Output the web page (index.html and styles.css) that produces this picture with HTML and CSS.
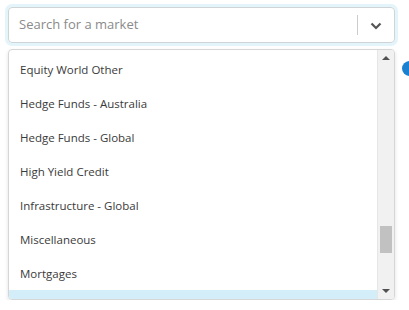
FILE: index.html
```html
<!DOCTYPE html>
<html lang="en">
<head>
  <meta charset="UTF-8" />
  <title>Market picker</title>
  <link rel="stylesheet" href="styles.css">
</head>
<body>
  <div class="picker">
    <div class="search">
      <input type="text" class="search-input" placeholder="Search for a market">
      <span class="divider"></span>
      <svg class="chevron" width="12" height="8" viewBox="0 0 12 8">
        <path d="M1.5 1.5 L6 6 L10.5 1.5" fill="none" stroke="#555" stroke-width="2.2"/>
      </svg>
    </div>

    <div class="menu">
      <ul class="options">
        <li>Equity World Other</li>
        <li>Hedge Funds - Australia</li>
        <li>Hedge Funds - Global</li>
        <li>High Yield Credit</li>
        <li>Infrastructure - Global</li>
        <li>Miscellaneous</li>
        <li>Mortgages</li>
        <li class="active"></li>
      </ul>
      <div class="scrollbar">
        <span class="arrow up"></span>
        <div class="track"><div class="thumb"></div></div>
        <span class="arrow down"></span>
      </div>
    </div>

    <span class="info-dot"></span>
  </div>
</body>
</html>
```

FILE: styles.css
```css
body {
  margin: 0;
  background-color: #ffffff;
  font-family: 'Open Sans', 'Liberation Sans', sans-serif;
}

.picker {
  position: relative;
  width: 387px;
  padding: 7px 0 0 8px;
}

.search {
  display: flex;
  align-items: center;
  height: 34px;
  border: 1px solid #cfd4d6;
  border-radius: 4px;
  box-shadow: 0 0 0 3px #e3f4fa;
}

.search-input {
  flex: 1;
  border: none;
  outline: none;
  background: transparent;
  padding: 0 0 2px 10px;
  font-family: 'Open Sans', 'Liberation Sans', sans-serif;
  font-size: 13px;
  color: #333;
}

.search-input::placeholder {
  color: #8a8a8a;
}

.divider {
  width: 1px;
  height: 20px;
  background-color: #cccccc;
}

.chevron {
  margin: 1px 12px 0 12px;
}

.menu {
  display: flex;
  margin-top: 6px;
  height: 249px;
  border: 1px solid #d6d6d6;
  border-radius: 4px;
  overflow: hidden;
  box-shadow: 0 2px 4px rgba(0, 0, 0, 0.12);
}

.options {
  flex: 1;
  list-style: none;
  margin: 0;
  padding: 3px 0 0 0;
  overflow: hidden;
}

.options li {
  height: 34px;
  line-height: 34px;
  padding-left: 11px;
  font-size: 11.5px;
  color: #3a3a3a;
}

.options li.active {
  margin-top: -1px;
  background-color: #d4eef9;
}

.scrollbar {
  display: flex;
  flex-direction: column;
  align-items: center;
  width: 16px;
  background-color: #f1f1f1;
  border-left: 1px solid #e6e6e6;
}

.arrow {
  width: 0;
  height: 0;
  border-left: 4px solid transparent;
  border-right: 4px solid transparent;
}

.arrow.up {
  margin: 6px 0 9px;
  border-bottom: 4px solid #505050;
}

.arrow.down {
  margin: 9px 0 6px;
  border-top: 4px solid #505050;
}

.track {
  flex: 1;
  width: 100%;
  position: relative;
}

.thumb {
  position: absolute;
  left: 2px;
  right: 2px;
  top: 157px;
  height: 27px;
  background-color: #c1c1c1;
}

.info-dot {
  position: absolute;
  left: 402px;
  top: 61px;
  width: 15px;
  height: 15px;
  border-radius: 50%;
  background-color: #1a80d0;
}
```
